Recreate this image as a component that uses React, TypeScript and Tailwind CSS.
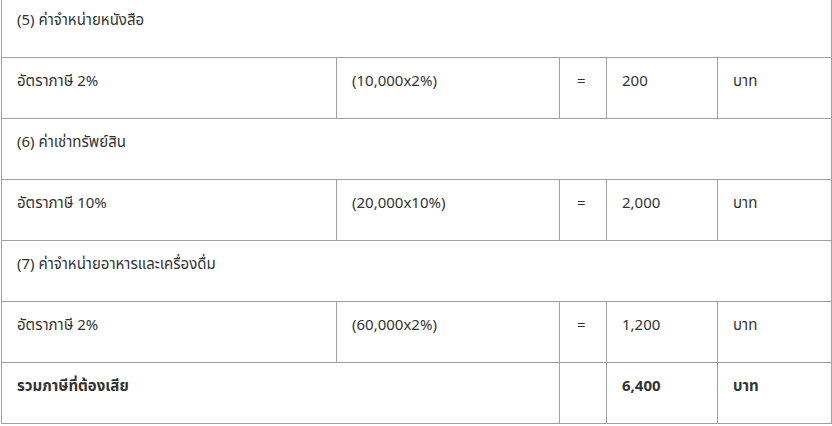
import React from "react";

const cell = "border border-[#a0a0a0] px-[15px] pt-[12px] align-top";

export default function App() {
  const section = (t: string) => (
    <tr className="h-[61px]">
      <td colSpan={5} className={cell}>{t}</td>
    </tr>
  );
  const line = (a: string, b: string, c: string) => (
    <tr className="h-[61px]">
      <td className={cell}>{a}</td>
      <td className={cell}>{b}</td>
      <td className={cell + " pl-[17px]"}>=</td>
      <td className={cell}>{c}</td>
      <td className={cell}>บาท</td>
    </tr>
  );
  return (
    <div
      className="w-[832px] h-[426px] overflow-hidden bg-white text-[15px] leading-[24px] text-[#333333]"
      style={{ fontFamily: '"Noto Sans Thai", "Noto Sans", "DejaVu Sans", sans-serif' }}
    >
      <div className="-mt-[4px] pl-[1px]">
        <table className="w-[830px] table-fixed border-collapse">
          <colgroup>
            <col className="w-[335px]" />
            <col className="w-[223px]" />
            <col className="w-[47px]" />
            <col className="w-[111px]" />
            <col className="w-[114px]" />
          </colgroup>
          <tbody>
            {section("(5) ค่าจำหน่ายหนังสือ")}
            {line("อัตราภาษี 2%", "(10,000x2%)", "200")}
            {section("(6) ค่าเช่าทรัพย์สิน")}
            {line("อัตราภาษี 10%", "(20,000x10%)", "2,000")}
            {section("(7) ค่าจำหน่ายอาหารและเครื่องดื่ม")}
            {line("อัตราภาษี 2%", "(60,000x2%)", "1,200")}
            <tr className="h-[61px] font-bold">
              <td colSpan={2} className={cell}>รวมภาษีที่ต้องเสีย</td>
              <td className={cell}></td>
              <td className={cell}>6,400</td>
              <td className={cell}>บาท</td>
            </tr>
          </tbody>
        </table>
      </div>
    </div>
  );
}
